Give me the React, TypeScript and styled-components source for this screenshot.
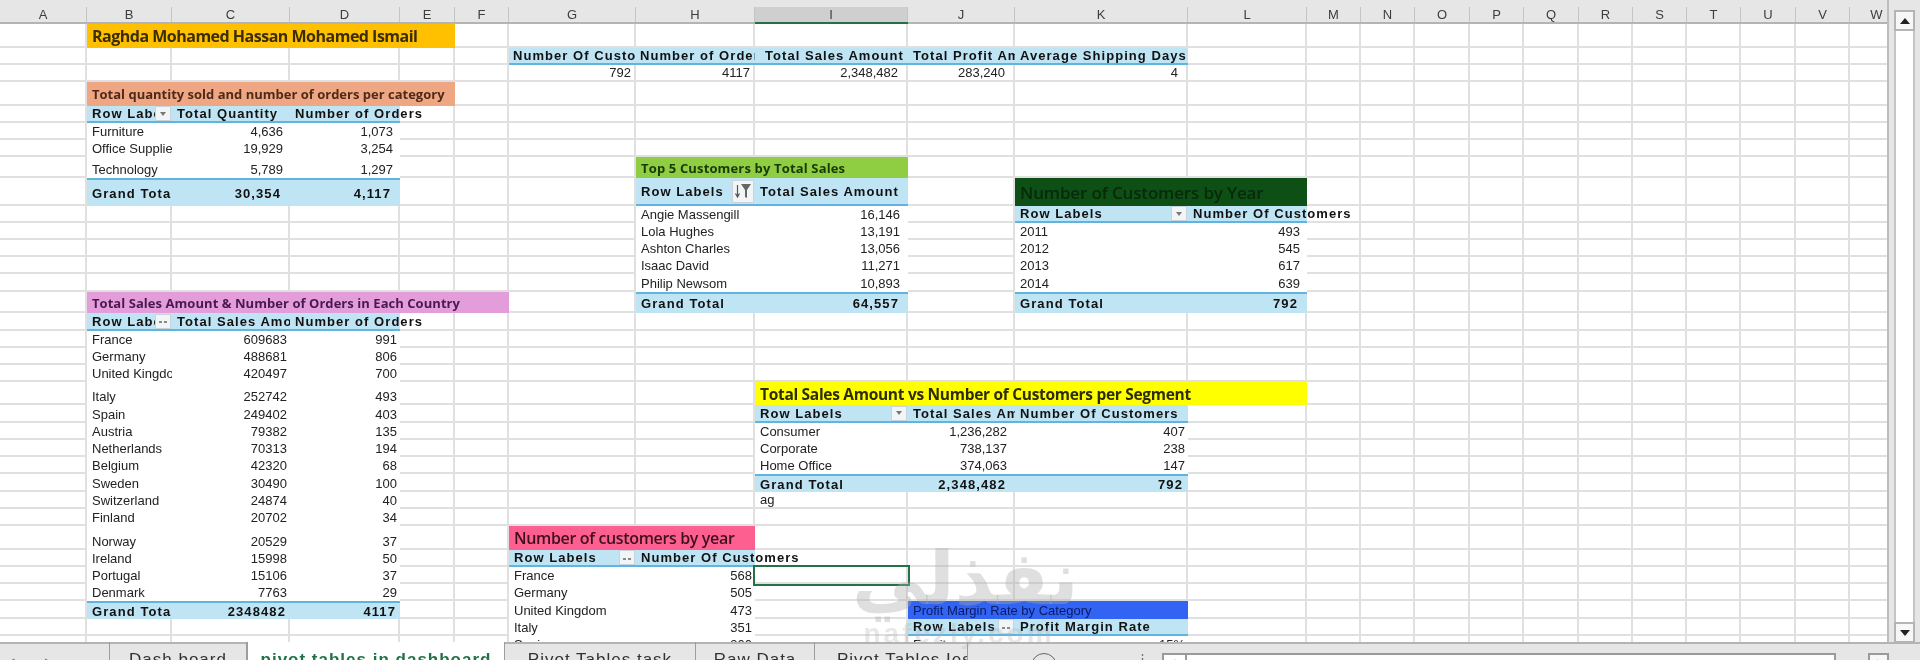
import React from "react";
import styled, { createGlobalStyle, css } from "styled-components";

const COLUMNS: [string, number][] = [
  ["A", 87], ["B", 85], ["C", 118], ["D", 110], ["E", 55], ["F", 54], ["G", 127], ["H", 119],
  ["I", 153], ["J", 107], ["K", 173], ["L", 119], ["M", 54], ["N", 54], ["O", 55], ["P", 54],
  ["Q", 55], ["R", 54], ["S", 54], ["T", 54], ["U", 55], ["V", 54], ["W", 54],
];
const COLUMN_TRACKS = COLUMNS.map(([, w]) => `${w}px`).join(" ");
const ROW_HEIGHTS = [24, 17, 17, 24, 17, 17, 17, 21, 28, 17, 17, 17, 17, 18, 21, 18, 17, 17, 17, 23, 18, 17, 17, 17, 18, 17, 17, 24, 17, 17, 17, 18, 17, 17];
const ROW_TRACKS = ROW_HEIGHTS.map((h) => `${h}px`).join(" ");

const Global = createGlobalStyle`
  html, body { margin: 0; padding: 0; background: #e6e6e6; }
  body { font-family: "Liberation Sans", Arial, sans-serif; }
`;

const Window = styled.div`
  position: relative;
  width: 1920px;
  height: 660px;
  overflow: hidden;
  display: flex;
  flex-direction: column;
  background: #e6e6e6;
  filter: blur(0.45px);
`;
const Workspace = styled.div`
  display: flex;
  height: 642px;
`;
const SheetPane = styled.div`
  flex: none;
  width: 1889px;
  overflow: hidden;
  display: flex;
  flex-direction: column;
  border-right: 2px solid #bdbdbd;
  box-sizing: border-box;
`;
const ColumnBar = styled.div`
  flex: none;
  display: grid;
  grid-template-columns: ${COLUMN_TRACKS};
  height: 24px;
  box-sizing: border-box;
  padding-top: 7px;
  border-bottom: 2px solid #b4b4b4;
  background: #e6e6e6;
`;
const ColumnLabel = styled.div<{ $active?: boolean }>`
  display: flex;
  align-items: center;
  justify-content: center;
  font-size: 13px;
  color: #3d3d3d;
  border-right: 1px solid #c4c4c4;
  ${(p) =>
    p.$active &&
    css`
      background: #cfcfcf;
      box-shadow: 0 2px 0 #217346;
    `}
`;
const SheetGrid = styled.div`
  flex: none;
  display: grid;
  grid-template-columns: ${COLUMN_TRACKS};
  grid-template-rows: ${ROW_TRACKS};
  height: 618px;
  overflow: hidden;
  background: #fff;
  color: #222;
  font-size: 13px;
`;

const baseCell = css<{ $span?: number }>`
  position: relative;
  grid-column: span ${(p) => p.$span ?? 1};
  box-sizing: border-box;
  display: flex;
  min-width: 0;
  white-space: nowrap;
`;
const PlainCell = styled.div<{ $pad?: number; $selected?: boolean }>`
  ${baseCell};
  align-items: flex-end;
  justify-content: ${(p) => (p.$pad !== undefined ? "flex-end" : "flex-start")};
  padding: 0 ${(p) => p.$pad ?? 0}px 0 ${(p) => (p.$pad !== undefined ? 0 : 5)}px;
  border-right: 2px solid #e0e0e0;
  border-bottom: 2px solid #e0e0e0;
  ${(p) =>
    p.$selected &&
    css`
      outline: 2px solid #217346;
      z-index: 2;
    `}
`;
const BodyCell = styled.div<{ $pad?: number }>`
  ${baseCell};
  overflow: hidden;
  align-items: flex-end;
  justify-content: ${(p) => (p.$pad !== undefined ? "flex-end" : "flex-start")};
  padding: 0 ${(p) => p.$pad ?? 0}px 1px ${(p) => (p.$pad !== undefined ? 0 : 5)}px;
  background: #fff;
`;
const HeadCell = styled.div<{ $spill?: boolean; $inset?: number }>`
  ${baseCell};
  overflow: ${(p) => (p.$spill ? "visible" : "hidden")};
  z-index: ${(p) => (p.$spill ? 1 : 0)};
  align-items: center;
  padding-left: ${(p) => p.$inset ?? 5}px;
  background: #bfe4f4;
  border-bottom: 2px solid #62b4e0;
  font-weight: 700;
  letter-spacing: 1.05px;
  color: #111;
`;
const TotalCell = styled.div<{ $pad?: number }>`
  ${baseCell};
  overflow: hidden;
  align-items: center;
  justify-content: ${(p) => (p.$pad !== undefined ? "flex-end" : "flex-start")};
  padding: 0 ${(p) => p.$pad ?? 0}px 0 ${(p) => (p.$pad !== undefined ? 0 : 5)}px;
  background: #bfe4f4;
  border-top: 2px solid #62b4e0;
  font-weight: 700;
  letter-spacing: 1.1px;
  color: #111;
`;

type Tone = "gold" | "salmon" | "lime" | "forest" | "orchid" | "lemon" | "rose" | "cobalt";
const TONES: Record<Tone, { bg: string; fg: string; size: number; weight: number; font: string; spacing: number }> = {
  gold: { bg: "#ffc000", fg: "#3b2d00", size: 16, weight: 700, font: "Open Sans", spacing: -0.5 },
  salmon: { bg: "#efa683", fg: "#4f2a18", size: 13, weight: 700, font: "Open Sans", spacing: 0 },
  lime: { bg: "#8fcd42", fg: "#173a08", size: 13, weight: 700, font: "Open Sans", spacing: 0.15 },
  forest: { bg: "#0e4f15", fg: "#062a0a", size: 17, weight: 600, font: "Open Sans", spacing: -0.15 },
  orchid: { bg: "#e39ddb", fg: "#4a1850", size: 13, weight: 700, font: "Open Sans", spacing: 0.05 },
  lemon: { bg: "#ffff00", fg: "#2d2d00", size: 15.5, weight: 700, font: "Open Sans", spacing: -0.3 },
  rose: { bg: "#fd5f90", fg: "#3f0f20", size: 16, weight: 600, font: "Open Sans", spacing: -0.35 },
  cobalt: { bg: "#3164f2", fg: "#0b1a66", size: 13, weight: 400, font: "Liberation Sans", spacing: 0 },
};
const TitleCell = styled.div<{ $tone: Tone; $span?: number }>`
  ${baseCell};
  align-items: center;
  padding-left: 5px;
  overflow: visible;
  background: ${(p) => TONES[p.$tone].bg};
  color: ${(p) => TONES[p.$tone].fg};
  font-family: "${(p) => TONES[p.$tone].font}", "Liberation Sans", sans-serif;
  font-size: ${(p) => TONES[p.$tone].size}px;
  font-weight: ${(p) => TONES[p.$tone].weight};
  letter-spacing: ${(p) => TONES[p.$tone].spacing}px;
`;
const HeadText = styled.span`
  flex: 1;
  min-width: 0;
  overflow: hidden;
`;
const HeadSpill = styled.span`
  flex: none;
`;
const PivotButton = styled.span<{ $wide?: boolean }>`
  flex: none;
  display: flex;
  align-items: center;
  justify-content: center;
  width: ${(p) => (p.$wide ? 22 : 16)}px;
  height: ${(p) => (p.$wide ? 23 : 15)}px;
  margin-right: 1px;
  box-sizing: border-box;
  background: #f1f5f7;
  border: 1px solid #c9d3d9;
`;

type Cell =
  | { kind: "title"; text: string; tone: Tone; span: number }
  | { kind: "head"; text: string; spill?: boolean; inset?: number; button?: "arrow" | "dots" | "filter" }
  | { kind: "body"; text: string; pad?: number }
  | { kind: "total"; text: string; pad?: number }
  | { kind: "plain"; text?: string; pad?: number; selected?: boolean };

const title = (text: string, tone: Tone, span: number): Cell => ({ kind: "title", text, tone, span });
const head = (text: string, extra: { spill?: boolean; inset?: number; button?: "arrow" | "dots" | "filter" } = {}): Cell => ({ kind: "head", text, ...extra });
const body = (text: string, pad?: number): Cell => ({ kind: "body", text, pad });
const total = (text: string, pad?: number): Cell => ({ kind: "total", text, pad });
const plain = (text: string, pad?: number): Cell => ({ kind: "plain", text, pad });

const country = (name: string, sales: string, orders: string) => ({ B: body(name), C: body(sales, 3), D: body(orders, 3) });

const ROWS: Record<string, Cell>[] = [
  { B: title("Raghda Mohamed Hassan Mohamed Ismail", "gold", 4) },
  {
    G: head("Number Of Customers", { inset: 4 }),
    H: head("Number of Orders", { inset: 4 }),
    I: head("Total Sales Amount", { inset: 10 }),
    J: head("Total Profit Amount", { inset: 5 }),
    K: head("Average Shipping Days", { inset: 5 }),
  },
  { G: plain("792", 3), H: plain("4117", 3), I: plain("2,348,482", 8), J: plain("283,240", 8), K: plain("4", 8) },
  { B: title("Total quantity sold and number of orders per category", "salmon", 4) },
  { B: head("Row Labels", { button: "arrow" }), C: head("Total Quantity"), D: head("Number of Orders", { spill: true }) },
  { B: body("Furniture"), C: body("4,636", 7), D: body("1,073", 7) },
  { B: body("Office Supplies"), C: body("19,929", 7), D: body("3,254", 7) },
  { B: body("Technology"), C: body("5,789", 7), D: body("1,297", 7), H: title("Top 5 Customers by Total Sales", "lime", 2) },
  {
    B: total("Grand Total"), C: total("30,354", 9), D: total("4,117", 9),
    H: head("Row Labels", { button: "filter" }), I: head("Total Sales Amount"),
    K: title("Number of Customers by Year", "forest", 2),
  },
  { H: body("Angie Massengill"), I: body("16,146", 8), K: head("Row Labels", { button: "arrow" }), L: head("Number Of Customers", { spill: true }) },
  { H: body("Lola Hughes"), I: body("13,191", 8), K: body("2011"), L: body("493", 7) },
  { H: body("Ashton Charles"), I: body("13,056", 8), K: body("2012"), L: body("545", 7) },
  { H: body("Isaac David"), I: body("11,271", 8), K: body("2013"), L: body("617", 7) },
  { H: body("Philip Newsom"), I: body("10,893", 8), K: body("2014"), L: body("639", 7) },
  { B: title("Total Sales Amount & Number of Orders in Each Country", "orchid", 5), H: total("Grand Total"), I: total("64,557", 9), K: total("Grand Total"), L: total("792", 9) },
  { B: head("Row Labels", { button: "dots" }), C: head("Total Sales Amount"), D: head("Number of Orders", { spill: true }) },
  country("France", "609683", "991"),
  country("Germany", "488681", "806"),
  country("United Kingdom", "420497", "700"),
  { ...country("Italy", "252742", "493"), I: title("Total Sales Amount vs Number of Customers per Segment", "lemon", 4) },
  { ...country("Spain", "249402", "403"), I: head("Row Labels", { button: "arrow" }), J: head("Total Sales Amount"), K: head("Number Of Customers", { inset: 5 }) },
  { ...country("Austria", "79382", "135"), I: body("Consumer"), J: body("1,236,282", 8), K: body("407", 3) },
  { ...country("Netherlands", "70313", "194"), I: body("Corporate"), J: body("738,137", 8), K: body("238", 3) },
  { ...country("Belgium", "42320", "68"), I: body("Home Office"), J: body("374,063", 8), K: body("147", 3) },
  { ...country("Sweden", "30490", "100"), I: total("Grand Total"), J: total("2,348,482", 9), K: total("792", 5) },
  { ...country("Switzerland", "24874", "40"), I: plain("ag") },
  country("Finland", "20702", "34"),
  { ...country("Norway", "20529", "37"), G: title("Number of customers by year", "rose", 2) },
  { ...country("Ireland", "15998", "50"), G: head("Row Labels", { button: "dots" }), H: head("Number Of Customers", { spill: true }) },
  { ...country("Portugal", "15106", "37"), G: body("France"), H: body("568", 3), I: { kind: "plain", selected: true } },
  { ...country("Denmark", "7763", "29"), G: body("Germany"), H: body("505", 3) },
  { B: total("Grand Total"), C: total("2348482", 4), D: total("4117", 4), G: body("United Kingdom"), H: body("473", 3), J: title("Profit Margin Rate by Category", "cobalt", 2) },
  { G: body("Italy"), H: body("351", 3), J: head("Row Labels", { button: "dots" }), K: head("Profit Margin Rate") },
  { G: body("Spain"), H: body("300", 3), J: body("Furniture"), K: body("15%", 3) },
];

const ButtonGlyph = ({ type }: { type: "arrow" | "dots" | "filter" }) => {
  if (type === "filter") {
    return (
      <svg width="18" height="19" viewBox="0 0 18 19" aria-hidden="true">
        <path d="M3.5 3v11M1.5 11.5l2 3.5 2-3.5" fill="none" stroke="#555" strokeWidth="1.2" />
        <path d="M7 2h10l-4 6v8l-2-1V8z" fill="#666" />
      </svg>
    );
  }
  if (type === "dots") {
    return (
      <svg width="10" height="8" viewBox="0 0 10 8" aria-hidden="true">
        <path d="M1 5h3M6 5h3" stroke="#666" strokeWidth="1.3" />
      </svg>
    );
  }
  return (
    <svg width="8" height="6" viewBox="0 0 8 6" aria-hidden="true">
      <path d="M1 1h6L4 5z" fill="#777" />
    </svg>
  );
};

const renderCell = (cell: Cell | undefined, key: string) => {
  if (!cell) return <PlainCell key={key} />;
  switch (cell.kind) {
    case "title":
      return <TitleCell key={key} $tone={cell.tone} $span={cell.span}>{cell.text}</TitleCell>;
    case "head":
      return (
        <HeadCell key={key} $spill={cell.spill} $inset={cell.inset}>
          {cell.spill ? <HeadSpill>{cell.text}</HeadSpill> : <HeadText>{cell.text}</HeadText>}
          {cell.button && (
            <PivotButton $wide={cell.button === "filter"}>
              <ButtonGlyph type={cell.button} />
            </PivotButton>
          )}
        </HeadCell>
      );
    case "body":
      return <BodyCell key={key} $pad={cell.pad}>{cell.text}</BodyCell>;
    case "total":
      return <TotalCell key={key} $pad={cell.pad}>{cell.text}</TotalCell>;
    default:
      return <PlainCell key={key} $pad={cell.pad} $selected={cell.selected}>{cell.text}</PlainCell>;
  }
};

const renderRow = (row: Record<string, Cell>, index: number) => {
  const out: React.ReactNode[] = [];
  let skip = 0;
  COLUMNS.forEach(([col]) => {
    if (skip > 0) {
      skip -= 1;
      return;
    }
    const cell = row[col];
    if (cell && cell.kind === "title") skip = cell.span - 1;
    out.push(renderCell(cell, `${col}${index}`));
  });
  return out;
};

const ScrollColumn = styled.div`
  flex: none;
  width: 31px;
  box-sizing: border-box;
  padding: 10px 5px 0 5px;
  display: flex;
  flex-direction: column;
  height: 643px;
`;
const ScrollButton = styled.div`
  flex: none;
  height: 21px;
  display: flex;
  align-items: center;
  justify-content: center;
  background: #f7f7f7;
  border: 2px solid #b4b4b4;
  box-sizing: border-box;
`;
const ScrollTrack = styled.div`
  flex: 1;
  background: #fff;
  border-left: 2px solid #c4c4c4;
  border-right: 2px solid #c4c4c4;
`;
const TabStrip = styled.div`
  position: relative;
  display: flex;
  height: 18px;
  overflow: hidden;
  background: #e6e6e6;
  box-shadow: inset 0 2px 0 #b4b4b4;
`;
const TabNav = styled.div`
  flex: none;
  width: 110px;
  box-sizing: border-box;
  display: flex;
  gap: 30px;
  padding: 12px 0 0 9px;
  border-right: 1px solid #9d9d9d;
  color: #777;
  font-size: 11px;
`;
const Tab = styled.div<{ $w: number; $active?: boolean; $inset?: number }>`
  flex: none;
  width: ${(p) => p.$w}px;
  box-sizing: border-box;
  overflow: hidden;
  padding: 8px 0 0 ${(p) => p.$inset ?? 0}px;
  text-align: ${(p) => (p.$inset !== undefined ? "left" : "center")};
  font-size: 17px;
  line-height: 20px;
  letter-spacing: 1px;
  white-space: nowrap;
  color: ${(p) => (p.$active ? "#217346" : "#333")};
  font-weight: ${(p) => (p.$active ? 700 : 400)};
  background: ${(p) => (p.$active ? "#fff" : "transparent")};
  border-right: 1px solid #9d9d9d;
  border-left: ${(p) => (p.$active ? "1px solid #9d9d9d" : "none")};
`;
const AddSheet = styled.div`
  flex: none;
  width: 26px;
  height: 26px;
  margin: 11px 0 0 63px;
  box-sizing: border-box;
  border: 1.5px solid #666;
  border-radius: 50%;
  text-align: center;
  font-size: 14px;
  line-height: 22px;
  color: #666;
`;
const SplitDots = styled.div`
  flex: none;
  width: 4px;
  margin: 14px 0 0 79px;
  color: #777;
  font-size: 13px;
  line-height: 5px;
`;
const HScroll = styled.div`
  flex: none;
  display: flex;
  width: 674px;
  height: 20px;
  margin: 11px 0 0 22px;
  box-sizing: border-box;
  border: 2px solid #9a9a9a;
  background: #fff;
`;
const HScrollEnd = styled.div`
  flex: none;
  width: 21px;
  height: 20px;
  margin: 11px 0 0 32px;
  box-sizing: border-box;
  border: 2px solid #9a9a9a;
  background: #f7f7f7;
  text-align: center;
  font-size: 10px;
  line-height: 14px;
  color: #333;
`;
const HScrollStart = styled.div`
  flex: none;
  width: 21px;
  border-right: 2px solid #9a9a9a;
  text-align: center;
  font-size: 10px;
  line-height: 14px;
  color: #333;
`;
const Watermark = styled.div`
  position: absolute;
  left: 852px;
  top: 532px;
  width: 214px;
  text-align: center;
  pointer-events: none;
  z-index: 5;
  color: rgba(170, 170, 170, 0.38);
`;
const WatermarkArabic = styled.div`
  font-family: "DejaVu Sans", sans-serif;
  font-weight: 700;
  font-size: 74px;
  line-height: 92px;
  white-space: nowrap;
`;
const WatermarkLatin = styled.div`
  font-family: "Liberation Sans", sans-serif;
  font-weight: 700;
  font-size: 28px;
  line-height: 26px;
  letter-spacing: 3px;
  margin-top: -3px;
  opacity: 0.7;
`;

export default function App() {
  return (
    <Window>
      <Global />
      <Workspace>
        <SheetPane>
          <ColumnBar>
            {COLUMNS.map(([c]) => (
              <ColumnLabel key={c} $active={c === "I"}>{c}</ColumnLabel>
            ))}
          </ColumnBar>
          <SheetGrid>{ROWS.map(renderRow)}</SheetGrid>
        </SheetPane>
        <ScrollColumn>
          <ScrollButton>
            <svg width="12" height="8" viewBox="0 0 12 8" aria-hidden="true"><path d="M6 1l5 6H1z" fill="#222" /></svg>
          </ScrollButton>
          <ScrollTrack />
          <ScrollButton>
            <svg width="12" height="8" viewBox="0 0 12 8" aria-hidden="true"><path d="M1 1h10L6 7z" fill="#222" /></svg>
          </ScrollButton>
        </ScrollColumn>
      </Workspace>
      <TabStrip>
        <TabNav><span>◂</span><span>▸</span></TabNav>
        <Tab $w={137}>Dash board</Tab>
        <Tab $w={258} $active>pivot tables in dashboard</Tab>
        <Tab $w={191}>Pivot Tables task</Tab>
        <Tab $w={119}>Raw Data</Tab>
        <Tab $w={153} $inset={22}>Pivot Tables Ies</Tab>
        <AddSheet>+</AddSheet>
        <SplitDots>⋮</SplitDots>
        <HScroll><HScrollStart>‹</HScrollStart></HScroll>
        <HScrollEnd>›</HScrollEnd>
      </TabStrip>
      <Watermark aria-hidden="true">
        <WatermarkArabic>نفذلي</WatermarkArabic>
        <WatermarkLatin>nafezly.com</WatermarkLatin>
      </Watermark>
    </Window>
  );
}
